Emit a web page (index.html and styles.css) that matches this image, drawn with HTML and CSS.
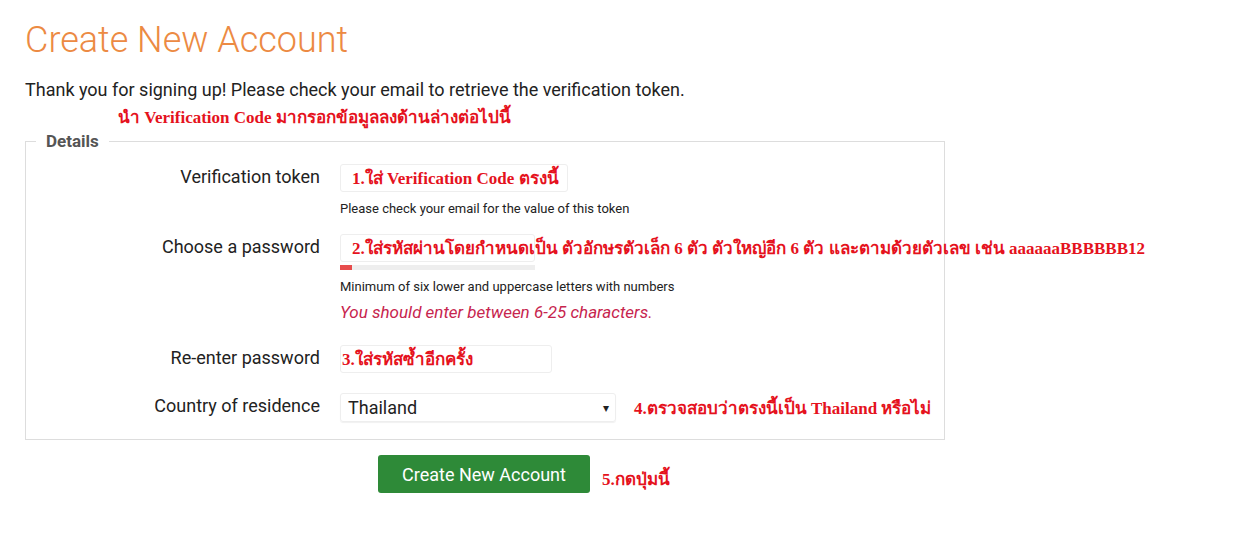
FILE: index.html
```html
<!DOCTYPE html>
<html lang="th">
<head>
  <meta charset="UTF-8" />
  <title>Create New Account</title>
  <link rel="stylesheet" href="styles.css">
</head>
<body>
  <div class="page">
    <h1 class="title">Create New Account</h1>
    <p class="intro">Thank you for signing up! Please check your email to retrieve the verification token.</p>
    <div class="note note-top">นำ Verification Code มากรอกข้อมูลลงด้านล่างต่อไปนี้</div>

    <fieldset class="details">
      <legend>Details</legend>

      <div class="row">
        <label class="label">Verification token</label>
        <div class="field">
          <div class="box box-token">
            <span class="note note-in">1.ใส่ Verification Code ตรงนี้</span>
          </div>
          <div class="hint">Please check your email for the value of this token</div>
        </div>
      </div>

      <div class="row">
        <label class="label">Choose a password</label>
        <div class="field">
          <div class="box box-pass">
            <span class="note note-in">2.ใส่รหัสผ่านโดยกำหนดเป็น ตัวอักษรตัวเล็ก 6 ตัว ตัวใหญ่อีก 6 ตัว และตามด้วยตัวเลข เช่น aaaaaaBBBBBB12</span>
          </div>
          <div class="strength"><div class="strength-bar" style="width: 6%;"></div></div>
          <div class="hint">Minimum of six lower and uppercase letters with numbers</div>
          <div class="error">You should enter between 6-25 characters.</div>
        </div>
      </div>

      <div class="row row-repeat">
        <label class="label">Re-enter password</label>
        <div class="field">
          <div class="box box-repeat">
            <span class="note note-in note-tight">3.ใส่รหัสซ้ำอีกครั้ง</span>
          </div>
        </div>
      </div>

      <div class="row">
        <label class="label">Country of residence</label>
        <div class="field field-inline">
          <div class="select">
            <span>Thailand</span>
            <span class="caret">▾</span>
          </div>
          <span class="note">4.ตรวจสอบว่าตรงนี้เป็น Thailand หรือไม่</span>
        </div>
      </div>
    </fieldset>

    <div class="actions">
      <button class="btn">Create New Account</button>
      <span class="note">5.กดปุ่มนี้</span>
    </div>
  </div>
</body>
</html>
```

FILE: styles.css
```css
html, body {
  margin: 0;
  padding: 0;
  background: white;
}
body {
  font-family: Roboto, "Liberation Sans", sans-serif;
  color: #222;
}
.page {
  padding: 0 0 0 25px;
  width: 920px;
}
.title {
  margin: 0;
  padding-top: 18px;
  font-size: 36px;
  font-weight: 300;
  line-height: 44px;
  color: #ec8a43;
}
.intro {
  margin: 0;
  padding-top: 17px;
  font-size: 18px;
  line-height: 22px;
}
.note {
  font-family: "Liberation Serif", serif;
  font-weight: bold;
  font-size: 17px;
  color: #e5121d;
  white-space: nowrap;
}
.note-top {
  padding-left: 93px;
  line-height: 22px;
  margin-top: 6px;
}
.details {
  margin: 2px 0 0;
  padding: 13px 0 17px;
  border: 1px solid #ddd;
  min-width: 0;
}
.details legend {
  margin-left: 10px;
  padding: 0 10px;
  font-size: 17px;
  font-weight: bold;
  color: #555;
}
.row {
  display: grid;
  grid-template-columns: 294px 1fr;
  column-gap: 20px;
  margin-bottom: 17px;
}
.row-repeat {
  margin-bottom: 20px;
}
.row:last-child {
  margin-bottom: 0;
}
.label {
  text-align: right;
  font-size: 18px;
  line-height: 22px;
  padding-top: 2px;
}
.field {
  display: flex;
  flex-direction: column;
  align-items: flex-start;
}
.field-inline {
  flex-direction: row;
  align-items: center;
  gap: 18px;
}
.box {
  position: relative;
  height: 26px;
  border: 1px solid #eee;
  border-radius: 3px;
  background: white;
}
.box-token { width: 226px; }
.box-pass { width: 193px; }
.box-repeat { width: 210px; }
.note-in {
  position: absolute;
  left: 11px;
  top: 3px;
  line-height: 22px;
}
.note-tight {
  left: 1px;
}
.hint {
  margin-top: 9px;
  font-size: 13px;
  line-height: 16px;
}
.strength {
  width: 195px;
  height: 5px;
  margin-top: 3px;
  background: #eee;
}
.strength-bar {
  height: 100%;
  background: #e74c4c;
}
.error {
  margin: 7px 0 6px;
  font-size: 17px;
  font-style: italic;
  line-height: 20px;
  color: #c7254e;
}
.select {
  display: flex;
  justify-content: space-between;
  align-items: center;
  box-sizing: border-box;
  width: 276px;
  height: 29px;
  padding: 0 6px 0 7px;
  border: 1px solid #eee;
  border-radius: 3px;
  box-shadow: 0 1px 1px rgba(0, 0, 0, 0.06);
  font-size: 18px;
}
.caret {
  font-size: 12px;
  color: #222;
}
.actions {
  display: flex;
  align-items: center;
  gap: 12px;
  padding: 15px 0 0 353px;
}
.btn {
  width: 212px;
  height: 38px;
  border: none;
  border-radius: 3px;
  background: #2e8a38;
  color: white;
  font-family: Roboto, "Liberation Sans", sans-serif;
  font-size: 18px;
  cursor: pointer;
}
.actions .note {
  padding-top: 8px;
}
```
